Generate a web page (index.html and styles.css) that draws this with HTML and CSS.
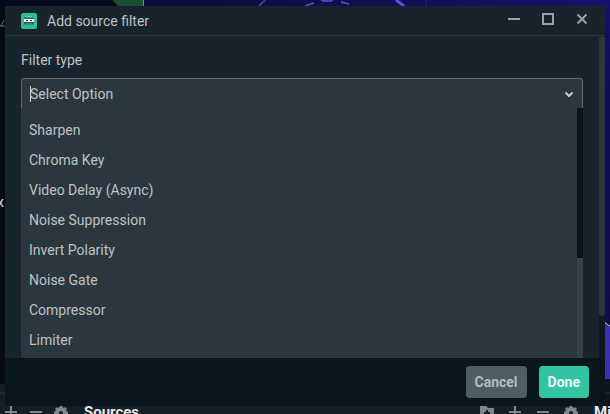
FILE: index.html
```html
<!DOCTYPE html>
<html lang="en">
<head>
    <meta charset="UTF-8">
    <meta name="viewport" content="width=device-width, initial-scale=1.0">
    <title>Add source filter</title>
    <link rel="stylesheet" href="styles.css">
</head>
<body>
    <!-- Scene behind the dialog -->
    <svg class="scene" viewBox="0 0 610 414" preserveAspectRatio="none" aria-hidden="true">
        <defs>
            <linearGradient id="sky" x1="0" x2="1">
                <stop offset="0" stop-color="#0b0d3c"/>
                <stop offset="0.5" stop-color="#110f50"/>
                <stop offset="1" stop-color="#15126a"/>
            </linearGradient>
            <linearGradient id="side" x1="0" x2="0" y1="0" y2="1">
                <stop offset="0" stop-color="#15126c"/>
                <stop offset="0.3" stop-color="#100c55"/>
                <stop offset="1" stop-color="#110d4c"/>
            </linearGradient>
        </defs>
        <rect width="610" height="414" fill="#060917"/>
        <rect x="144" width="466" height="10" fill="url(#sky)"/>
        <path d="M112 0h31v6h-25z" fill="#1d4c34"/>
        <path d="M143 0h1v6h-1z" fill="#3fae6b"/>
        <path d="M265 0l-6 6" stroke="#403b91" stroke-width="2"/>
        <path d="M305 6l9-3M341 2l8 2" stroke="#4b43c4" stroke-width="2"/>
        <path d="M320 0h14l-3 2h-8z" fill="#4b43c4"/>
        <path d="M396 0l8 6" stroke="#5b52d8" stroke-width="3"/>
        <path d="M426 0v6" stroke="#26226e"/>
        <rect x="604" width="6" height="322" fill="url(#side)"/>
        <path d="M604 322l6 4v53h-6z" fill="#3a32b2"/>
        <path d="M604 322l6 4" stroke="#b9b5ee" stroke-width="1"/>
        <path d="M604 379h6v35h-6z" fill="#0c161c"/>
        <path d="M0 384h6v30H0z" fill="#141e25"/>
        <path d="M0 393h6M604 393h6" stroke="#2b373e"/>
        <path d="M0 26h5M4 20l-3 6" stroke="#5b7a7c" fill="none"/>
        <text class="scene-text" x="-3" y="207">x</text>
    </svg>

    <main class="dialog" role="dialog" aria-labelledby="title">
        <header class="titlebar">
            <svg class="logo" width="16" height="16" viewBox="0 0 16 16" aria-hidden="true">
                <rect width="16" height="16" rx="2" fill="#31b99a"/>
                <rect x="3" y="4" width="10" height="8" rx="3" fill="#1d5552"/>
                <path d="M5 4h6" stroke="#8ccfc0"/>
                <path d="M3 6h10v3H3z" fill="#e8f6f3"/>
                <path d="M5 7h2v1H5zM9 7h2v1H9z" fill="#17242d"/>
                <path d="M5 11h6" stroke="#6fb5a8"/>
            </svg>
            <h1 class="title" id="title">Add source filter</h1>
            <div class="window-controls">
                <button type="button" aria-label="Minimize">
                    <svg width="12" height="12" viewBox="0 0 12 12"><path d="M0 6h12" stroke-width="2"/></svg>
                </button>
                <button type="button" aria-label="Maximize">
                    <svg width="12" height="12" viewBox="0 0 12 12"><path d="M1 1h10v10H1z" stroke-width="2"/></svg>
                </button>
                <button type="button" aria-label="Close">
                    <svg width="12" height="12" viewBox="0 0 12 12"><path d="M1.500 1.500l9 9M10.500 1.500l-9 9" stroke-width="2"/></svg>
                </button>
            </div>
        </header>

        <div class="content">
            <form class="form">
                <label class="label" for="filterType">Filter type</label>
                <div class="select">
                    <div class="select-head">
                        <span class="caret"></span>
                        <input class="select-input" type="text" id="filterType" placeholder="Select Option" role="combobox" aria-expanded="true" aria-controls="filterList">
                        <button class="select-toggle" type="button" aria-label="Toggle options">
                            <svg width="10" height="8" viewBox="0 0 10 8"><path d="M1.500 2.500L5 6l3.500-3.500" stroke-width="2"/></svg>
                        </button>
                    </div>
                    <div class="dropdown">
                        <ul class="options" id="filterList" role="listbox">
                            <li role="option">Sharpen</li>
                            <li role="option">Chroma Key</li>
                            <li role="option">Video Delay (Async)</li>
                            <li role="option">Noise Suppression</li>
                            <li role="option">Invert Polarity</li>
                            <li role="option">Noise Gate</li>
                            <li role="option">Compressor</li>
                            <li role="option">Limiter</li>
                        </ul>
                        <div class="scrollbar list-scrollbar"><div class="thumb"></div></div>
                    </div>
                </div>
            </form>
            <div class="scrollbar page-scrollbar"><div class="thumb"></div></div>
        </div>

        <footer class="actions">
            <button class="btn btn-cancel" type="button">Cancel</button>
            <button class="btn btn-done" type="button">Done</button>
        </footer>
    </main>

    <!-- Top edge of the editor panels -->
    <div class="panels">
        <div class="tools">
            <svg width="14" height="14" viewBox="0 0 14 14"><path d="M7 0v12M1 6h12" stroke-width="2"/></svg>
            <svg width="14" height="14" viewBox="0 0 14 14"><path d="M1 6h12" stroke-width="2"/></svg>
            <svg width="14" height="14" viewBox="0 0 14 14"><circle cx="7" cy="7" r="4" stroke-width="4"/><path d="M7 0v3M7 11v3M0 7h3M11 7h3M2 2l2 2M10 10l2 2M12 2l-2 2M4 10l-2 2" stroke-width="3"/></svg>
        </div>
        <h2 class="panel-title">Sources</h2>
        <div class="tools tools-right">
            <svg width="14" height="14" viewBox="0 0 14 14"><path class="solid" d="M0 0h6l2 2h6v12H0z"/><path d="M7 4v8M4 7h6" stroke="#141e25" stroke-width="2"/></svg>
            <svg width="14" height="14" viewBox="0 0 14 14"><path d="M7 0v12M1 6h12" stroke-width="2"/></svg>
            <svg width="14" height="14" viewBox="0 0 14 14"><path d="M1 6h12" stroke-width="2"/></svg>
            <svg width="14" height="14" viewBox="0 0 14 14"><circle cx="7" cy="7" r="4" stroke-width="4"/><path d="M7 0v3M7 11v3M0 7h3M11 7h3M2 2l2 2M10 10l2 2M12 2l-2 2M4 10l-2 2" stroke-width="3"/></svg>
        </div>
        <h2 class="panel-title">Mixer</h2>
    </div>
</body>
</html>
```

FILE: styles.css
```css
* {
    box-sizing: border-box;
}
body {
    display: flex;
    flex-direction: column;
    height: 100vh;
    margin: 0;
    overflow: hidden;
    background-color: #060917;
    color: #bdc3c5;
    font-family: Roboto, Arial, sans-serif;
    font-size: 14px;
}
button {
    padding: 0;
    border: none;
    background: none;
    color: inherit;
    font: inherit;
    cursor: pointer;
}
svg {
    display: block;
    flex: none;
}
.scene {
    position: absolute;
    top: 0;
    left: 0;
    z-index: -1;
    width: 100%;
    height: 100%;
}
.scene-text {
    fill: #d6dadc;
    font-size: 14px;
}

/* Dialog */
.dialog {
    display: flex;
    flex: 1;
    flex-direction: column;
    min-height: 0;
    margin: 6px 5px 0;
    background-color: #17242d;
}
.titlebar {
    display: flex;
    align-items: center;
    gap: 10px;
    height: 30px;
    padding: 0 17px 0 16px;
    border-bottom: 1px solid #2b383f;
}
.title {
    margin: 0;
    font-size: 14px;
    font-weight: 400;
}
.window-controls {
    display: flex;
    gap: 22px;
    margin-left: auto;
    padding-bottom: 4px;
}
.window-controls svg,
.select-toggle svg {
    fill: none;
    stroke: #98a3aa;
}
.content {
    display: flex;
    flex: 1;
    min-height: 0;
}
.form {
    display: flex;
    flex: 1;
    flex-direction: column;
    min-width: 0;
    padding: 16px 16px 0;
}
.label {
    margin-bottom: 10px;
    line-height: 16px;
}

/* Select with its open list */
.select {
    display: flex;
    flex: 1;
    flex-direction: column;
    min-height: 0;
    background-color: #2b373f;
    border-radius: 3px 3px 0 0;
}
.select-head {
    display: flex;
    align-items: center;
    height: 30px;
    padding: 0 8px;
    border: 1px solid #5a666c;
    border-bottom: none;
    border-radius: 3px 3px 0 0;
}
.caret {
    width: 1px;
    height: 16px;
    margin-right: -1px;
    background-color: #d6dadc;
}
.select-input {
    flex: 1;
    min-width: 0;
    padding: 0;
    border: none;
    outline: none;
    background: none;
    color: #bdc3c5;
    font: inherit;
}
.select-input::placeholder {
    color: #bdc3c5;
    opacity: 1;
}
.select-toggle svg {
    stroke: #c5cbce;
}
.dropdown {
    display: flex;
    flex: 1;
    min-height: 0;
    overflow: hidden;
}
.options {
    flex: 1;
    margin: 0;
    padding: 7px 8px;
    list-style: none;
}
.options li {
    line-height: 30px;
}
.scrollbar {
    flex: none;
    width: 6px;
}
.list-scrollbar {
    background-color: #364148;
}
.list-scrollbar .thumb {
    height: 60%;
    background-color: #09151c;
}
.page-scrollbar {
    background-color: #0d181f;
}
.page-scrollbar .thumb {
    height: 87%;
    border-radius: 3px;
    background-color: #2b373f;
}

/* Footer */
.actions {
    display: flex;
    justify-content: flex-end;
    gap: 12px;
    height: 48px;
    padding: 8px 16px;
    background-color: #09161e;
}
.btn {
    padding: 0 9px;
    border-radius: 4px;
    font-weight: 700;
}
.btn-cancel {
    background-color: #4f5d65;
    color: #b4bdc2;
}
.btn-done {
    background-color: #31c3a2;
    color: #eefaf7;
}

/* Panels */
.panels {
    display: flex;
    gap: 16px;
    height: 8px;
    padding-left: 4px;
    overflow: hidden;
    background-color: #141e25;
}
.tools {
    display: flex;
    gap: 11px;
}
.tools svg {
    fill: none;
    stroke: #7d878c;
}
.tools .solid {
    fill: #7d878c;
    stroke: none;
}
.tools-right {
    gap: 14px;
    margin-left: auto;
}
.panel-title {
    width: 60px;
    margin: 0;
    color: #e6eaec;
    font-size: 15px;
    font-weight: 700;
    line-height: 12px;
}
.panel-title:last-child {
    width: 16px;
}
```
